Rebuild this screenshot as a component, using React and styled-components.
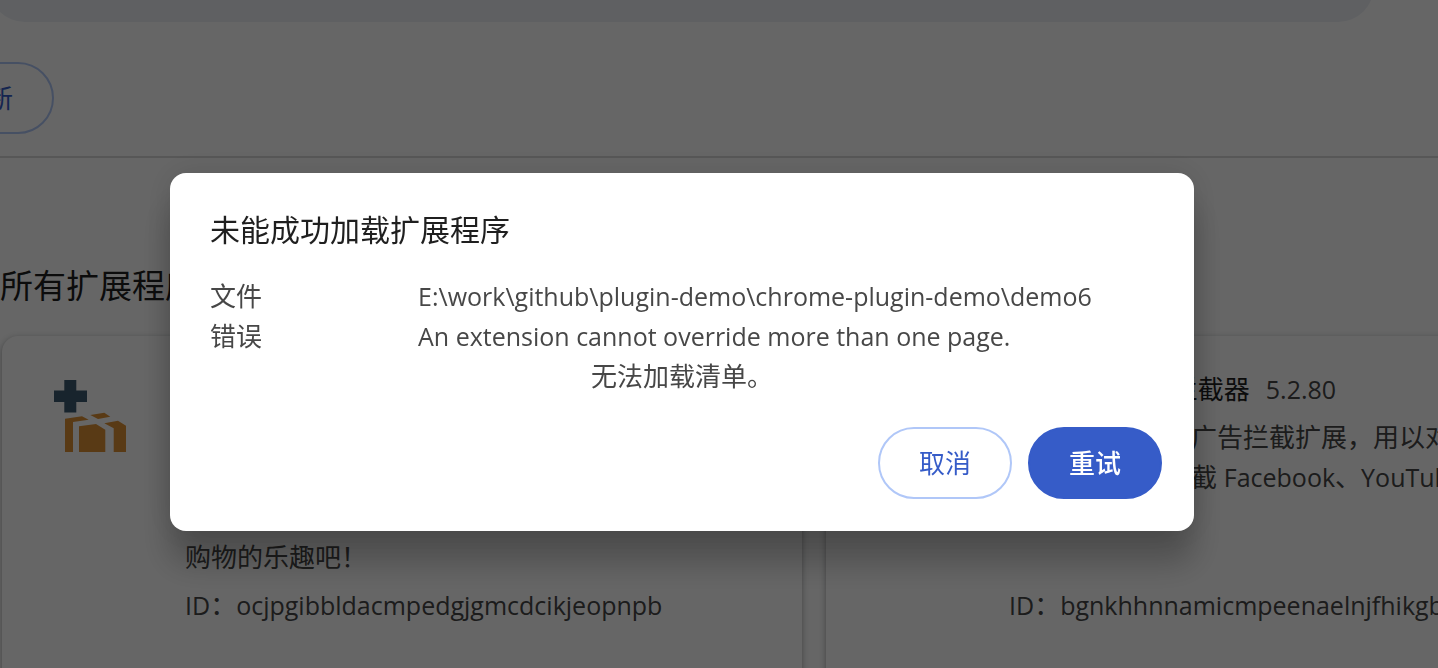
import React from "react";
import styled, { createGlobalStyle } from "styled-components";

const GlobalStyle = createGlobalStyle`
  * { box-sizing: border-box; }
  body {
    margin: 0;
    background: #fff;
    color: #474747;
    font: 26px/40px "Open Sans", "Noto Sans CJK SC", sans-serif;
  }
`;

const Page = styled.div`
  height: 100vh;
  overflow: hidden;
`;

const TopBar = styled.header`
  display: flex;
  align-items: flex-end;
  height: 22px;
  padding-right: 64px;
  overflow: hidden;
`;

const SearchField = styled.input`
  flex: 1;
  height: 72px;
  margin-left: -11px;
  border: 0;
  border-radius: 36px;
  background: #edf1f6;
`;

const Toolbar = styled.div`
  display: flex;
  margin-top: 40px;
  margin-left: -80px;
  padding-bottom: 22px;
  border-bottom: 2px solid #dadada;
`;

const Button = styled.button`
  height: 72px;
  padding: 0 39px;
  border: 2px solid ${(p) => (p.$primary ? "#365cc8" : "#b0c7f8")};
  border-radius: 36px;
  background: ${(p) => (p.$primary ? "#365cc8" : "#fff")};
  color: ${(p) => (p.$primary ? "#fff" : "#365cc8")};
  font: inherit;
  font-weight: ${(p) => (p.$primary ? 500 : 400)};
`;

const Section = styled.main`
  padding-top: 108px;
`;

const SectionTitle = styled.h2`
  margin: 0 0 30px;
  color: #1f1f1f;
  font-size: 33px;
  font-weight: 400;
  line-height: 40px;
`;

const CardGrid = styled.div`
  display: grid;
  grid-template-columns: repeat(2, 800px);
  gap: 24px;
  margin-left: 2px;
`;

const Card = styled.article`
  display: flex;
  gap: 59px;
  min-height: 420px;
  padding: 33px 39px 0 52px;
  border-radius: 16px;
  background: #fff;
  box-shadow: 0 2px 4px rgba(60, 64, 67, 0.3), 0 2px 6px 2px rgba(60, 64, 67, 0.15);
`;

const IconSlot = styled.div`
  flex: none;
  width: 72px;
  height: 72px;
  margin-top: 11px;
`;

const CardBody = styled.div`
  flex: 1;
  min-width: 0;
`;

const CardHeading = styled.div`
  display: flex;
  gap: 16px;
  height: 40px;
  margin-bottom: 8px;
`;

const Name = styled.h3`
  margin: 0;
  color: #1f1f1f;
  font: inherit;
`;

const Latin = styled.span`
  font-size: 25px;
`;

const Description = styled.div`
  display: flex;
  align-items: ${(p) => (p.$end ? "flex-end" : "flex-start")};
  height: 160px;
  margin-bottom: 8px;
`;

const Identifier = styled.div`
  white-space: nowrap;
`;

const Backdrop = styled.div`
  position: fixed;
  inset: 0;
  display: flex;
  align-items: flex-start;
  justify-content: center;
  padding: 173px 74px 0 0;
  background: rgba(0, 0, 0, 0.6);
`;

const Dialog = styled.section`
  width: 100%;
  max-width: 1024px;
  padding: 37px 32px 32px 40px;
  border-radius: 16px;
  background: #fff;
  box-shadow: 0 0 32px rgba(0, 0, 0, 0.12), 0 32px 32px rgba(0, 0, 0, 0.24);
`;

const DialogTitle = styled.h1`
  margin: 0 0 26px;
  color: #1f1f1f;
  font-size: 30px;
  font-weight: 400;
  line-height: 40px;
`;

const Details = styled.dl`
  display: grid;
  grid-template-columns: 208px 1fr;
  margin: 0;
`;

const Term = styled.dt``;

const Value = styled.dd`
  margin: 0;
  font-size: 25px;
`;

const Note = styled.p`
  margin: 0;
  padding-right: 8px;
  text-align: center;
`;

const Actions = styled.div`
  display: flex;
  justify-content: flex-end;
  gap: 16px;
  margin-top: 31px;
`;

function GiftIcon() {
  return (
    <svg width="72" height="72" viewBox="0 0 72 72" aria-hidden="true">
      <path fill="#3c5a70" d="M10.3 0H22.3V10.5H33V22H22.3V32.6H10.3V22H0V10.5H10.3Z" />
      <g fill="#de9236">
        <path d="M11 38.7 28 36.3 34.7 39.7 19 42V72H11Z" />
        <path d="M36.3 35 50.3 32.7 56.3 36.7 44 39Z" />
        <path d="M25 46.3 42 44 51.3 49.7V72H25Z" />
        <path d="M50.3 43.3 64 40.7 72 45.7V72H59.7V48.3Z" />
      </g>
    </svg>
  );
}

function ExtensionCard({ icon, name, version, children, alignEnd, id }) {
  return (
    <Card>
      <IconSlot>{icon}</IconSlot>
      <CardBody>
        <CardHeading>
          {name && <Name>{name}</Name>}
          {version && <Latin>{version}</Latin>}
        </CardHeading>
        <Description $end={alignEnd}>
          <div>{children}</div>
        </Description>
        <Identifier>
          <Latin>ID</Latin>
          {"\uFF1A"}
          <Latin>{id}</Latin>
        </Identifier>
      </CardBody>
    </Card>
  );
}

export default function App() {
  return (
    <>
      <GlobalStyle />
      <Page lang="zh-CN">
        <TopBar>
          <SearchField type="search" aria-label="搜索扩展程序" />
        </TopBar>
        <Toolbar>
          <Button type="button">更新</Button>
        </Toolbar>
        <Section>
          <SectionTitle>所有扩展程序</SectionTitle>
          <CardGrid>
            <ExtensionCard icon={<GiftIcon />} alignEnd id="ocjpgibbldacmpedgjgmcdcikjeopnpb">
              {"购物的乐趣吧\uFF01"}
            </ExtensionCard>
            <ExtensionCard
              name={<><Latin>AdGuard</Latin> 广告拦截器</>}
              version="5.2.80"
              id="bgnkhhnnamicmpeenaelnjfhikgbkllg"
            >
              {"一款无与伦比的广告拦截扩展\uFF0C用以对抗各式广告与弹窗。可以拦截 "}
              <Latin>Facebook</Latin>、<Latin>YouTube</Latin> 和其它所有网站的广告。
            </ExtensionCard>
          </CardGrid>
        </Section>
      </Page>
      <Backdrop lang="zh-CN">
        <Dialog role="dialog" aria-modal="true" aria-labelledby="load-error-title">
          <DialogTitle id="load-error-title">未能成功加载扩展程序</DialogTitle>
          <Details>
            <Term>文件</Term>
            <Value>E:\work\github\plugin-demo\chrome-plugin-demo\demo6</Value>
            <Term>错误</Term>
            <Value>An extension cannot override more than one page.</Value>
          </Details>
          <Note>无法加载清单。</Note>
          <Actions>
            <Button type="button">取消</Button>
            <Button type="button" $primary>重试</Button>
          </Actions>
        </Dialog>
      </Backdrop>
    </>
  );
}
